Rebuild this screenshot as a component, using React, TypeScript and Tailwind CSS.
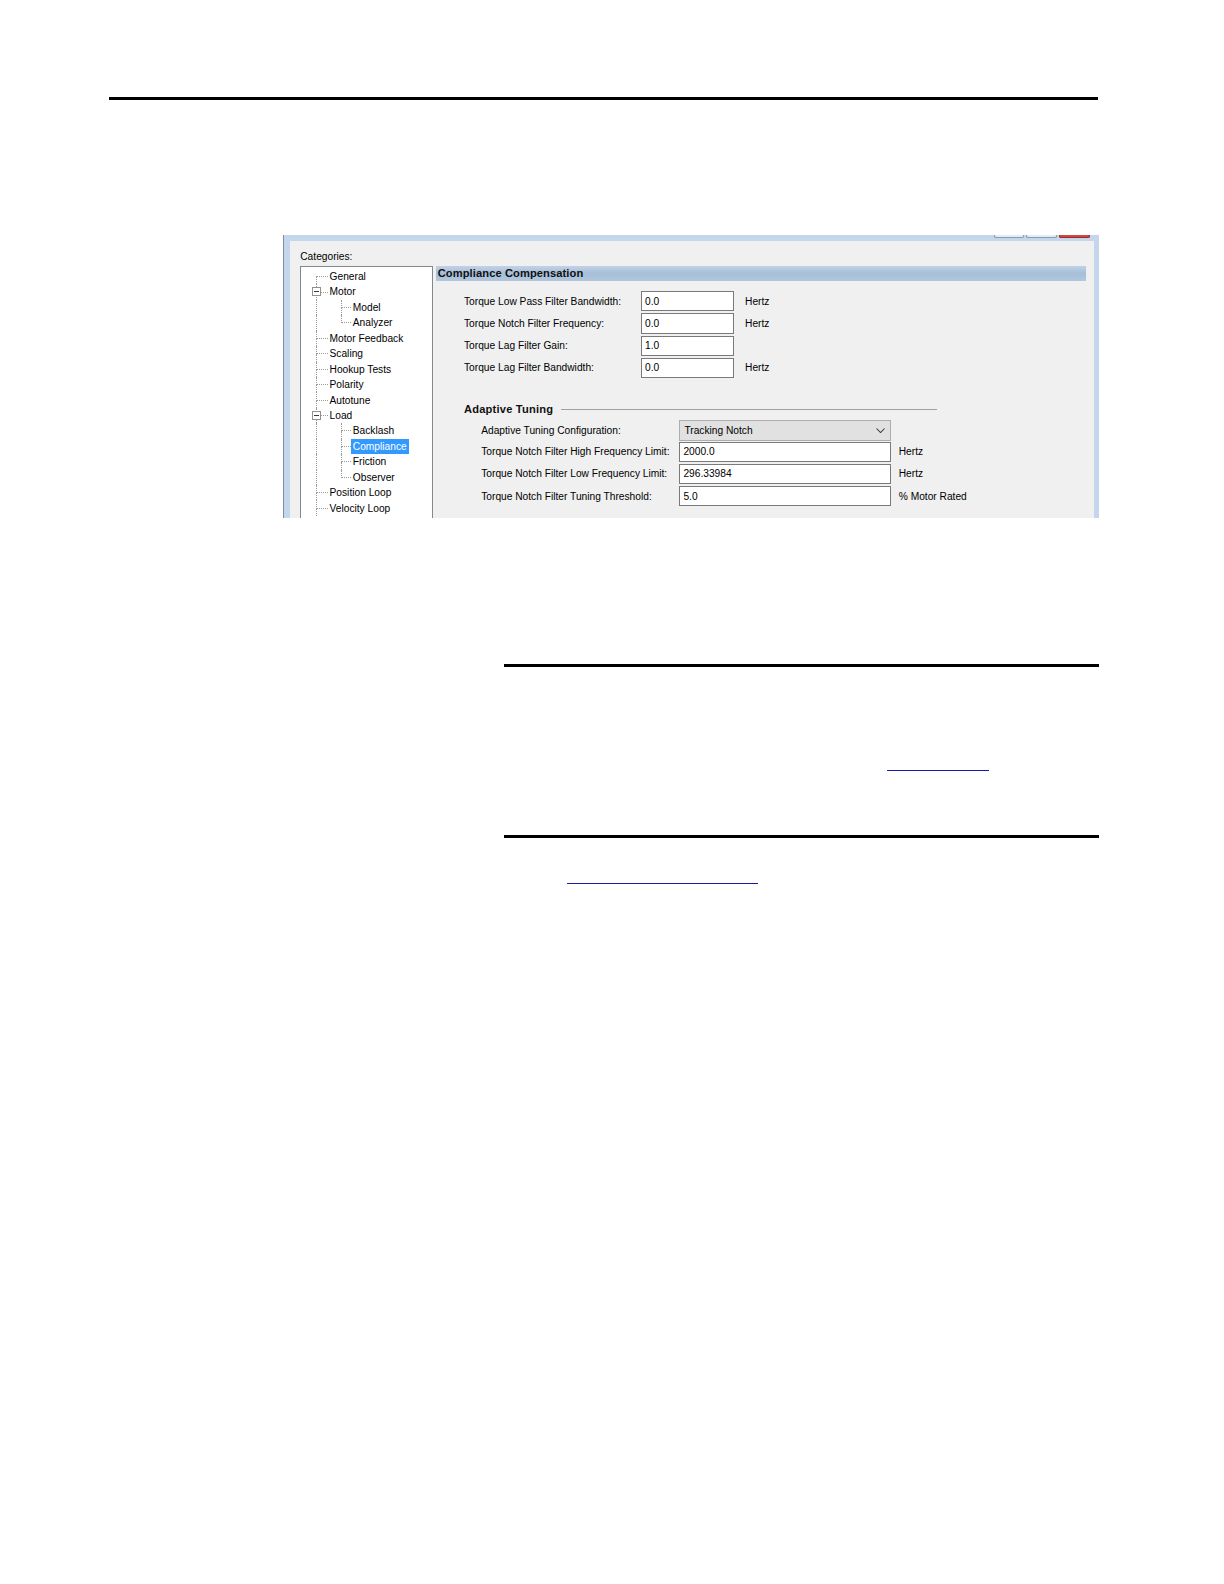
import React from 'react';

type TreeNode = {
  label: string;
  level: 1 | 2;
  expander?: boolean;
  first?: boolean;
  lastChild?: boolean;
  selected?: boolean;
};

const tree: TreeNode[] = [
  { label: 'General', level: 1, first: true },
  { label: 'Motor', level: 1, expander: true },
  { label: 'Model', level: 2 },
  { label: 'Analyzer', level: 2, lastChild: true },
  { label: 'Motor Feedback', level: 1 },
  { label: 'Scaling', level: 1 },
  { label: 'Hookup Tests', level: 1 },
  { label: 'Polarity', level: 1 },
  { label: 'Autotune', level: 1 },
  { label: 'Load', level: 1, expander: true },
  { label: 'Backlash', level: 2 },
  { label: 'Compliance', level: 2, selected: true },
  { label: 'Friction', level: 2 },
  { label: 'Observer', level: 2, lastChild: true },
  { label: 'Position Loop', level: 1 },
  { label: 'Velocity Loop', level: 1 },
];

const compensation = [
  { label: 'Torque Low Pass Filter Bandwidth:', value: '0.0', unit: 'Hertz' },
  { label: 'Torque Notch Filter Frequency:', value: '0.0', unit: 'Hertz' },
  { label: 'Torque Lag Filter Gain:', value: '1.0', unit: '' },
  { label: 'Torque Lag Filter Bandwidth:', value: '0.0', unit: 'Hertz' },
];

const adaptive = [
  { label: 'Torque Notch Filter High Frequency Limit:', value: '2000.0', unit: 'Hertz' },
  { label: 'Torque Notch Filter Low Frequency Limit:', value: '296.33984', unit: 'Hertz' },
  { label: 'Torque Notch Filter Tuning Threshold:', value: '5.0', unit: '% Motor Rated' },
];

// dotted connector: vertical line on the left, horizontal tick at the middle
function Guide({ first, last, width }: { first?: boolean; last?: boolean; width: string }) {
  return (
    <div className={`flex flex-col self-stretch shrink-0 ${width}`}>
      <div className={`flex-1 border-b border-dotted border-[#9a9a9a] ${first ? '' : 'border-l'}`} />
      <div className={`flex-1 border-dotted border-[#9a9a9a] ${last ? '' : 'border-l'}`} />
    </div>
  );
}

function TreeRow({ node }: { node: TreeNode }) {
  return (
    <div className="relative flex h-[15.27px] items-stretch">
      <div className="w-[15px] shrink-0" />
      {node.level === 1 ? (
        <Guide first={node.first} width="w-[11px]" />
      ) : (
        <>
          <div className="w-[24px] shrink-0 border-l border-dotted border-[#9a9a9a]" />
          <Guide last={node.lastChild} width="w-[10px]" />
        </>
      )}
      <div className="flex items-center">
        <span
          className={`px-[2px] leading-[15px] whitespace-nowrap ${
            node.selected ? 'bg-[#3399ff] text-white' : 'text-black'
          }`}
        >
          {node.label}
        </span>
      </div>
      {node.expander && (
        <div className="absolute left-[11px] top-[3px] flex h-[9px] w-[9px] items-center justify-center border border-[#919191] bg-white">
          <div className="h-px w-[5px] bg-[#3c3c3c]" />
        </div>
      )}
    </div>
  );
}

function TextBox({ value, w }: { value: string; w: string }) {
  return (
    <div className={`flex h-[20px] shrink-0 items-center border border-[#7a7a7a] bg-white pl-[3px] text-black ${w}`}>
      {value}
    </div>
  );
}

export default function App() {
  return (
    <div className="w-full bg-white pb-[200px] [zoom:1.011] [font-family:'Liberation_Sans',Arial,sans-serif]">
      <div className="h-[96px]" />
      <div className="ml-[108px] h-[3px] w-[978px] bg-black" />

      {/* dialog screenshot */}
      <div className="ml-[280px] mt-[133px] flex h-[280px] w-[807px] flex-col overflow-hidden border-l border-[#7f8d9c] bg-[#c4d6ec] text-[10.1px]">
        <div className="flex h-[6px] shrink-0 justify-end gap-[2px] pr-[9px]">
          <div className="h-[3px] w-[30px] rounded-b-[2px] border-x border-b border-[#8b9bb0] bg-[#e3ebf5]" />
          <div className="h-[3px] w-[30px] rounded-b-[2px] border-x border-b border-[#8b9bb0] bg-[#e3ebf5]" />
          <div className="h-[3px] w-[31px] rounded-b-[2px] border-x border-b border-[#9b2b2b] bg-[#d2473f]" />
        </div>
        <div className="ml-[6px] mr-[5px] flex flex-1 flex-col bg-[#f0f0f0] pl-[10px] pr-[8px]">
          <div className="pt-[10px] leading-[12px] text-black">Categories:</div>
          <div className="mt-[3px] flex flex-1 gap-[3px]">
            <div className="w-[131px] shrink-0 border-x border-t border-[#828790] bg-white pt-[2px]">
              {tree.map((n) => (
                <TreeRow key={n.label} node={n} />
              ))}
            </div>

            <div className="flex flex-1 flex-col">
              <div className="h-[15px] bg-gradient-to-b from-[#c0d2e6] via-[#a6bed8] to-[#b2c7de] pl-[2px] text-[11px] font-bold leading-[15px] tracking-[0.1px] text-[#101010]">
                Compliance Compensation
              </div>

              <div className="mt-[9px] flex flex-col pl-[28px]">
                {compensation.map((f) => (
                  <div key={f.label} className="flex h-[22px] items-center">
                    <div className="w-[175px] shrink-0 text-black">{f.label}</div>
                    <TextBox value={f.value} w="w-[92px]" />
                    <div className="ml-[11px] text-black">{f.unit}</div>
                  </div>
                ))}
              </div>

              <div className="ml-[28px] mt-[23px] flex h-[14px] w-[468px] items-center gap-[8px]">
                <div className="text-[11px] font-bold tracking-[0.2px] text-[#101010]">Adaptive Tuning</div>
                <div className="h-px flex-1 bg-[#a0a0a0]" />
              </div>

              <div className="mt-[4px] flex flex-col pl-[45px]">
                <div className="flex h-[20px] items-center">
                  <div className="w-[196px] shrink-0 text-black">Adaptive Tuning Configuration:</div>
                  <div className="flex h-[20px] w-[209px] items-center justify-between border border-[#adadad] bg-[#e1e1e1] pl-[4px] pr-[5px] text-black">
                    <span>Tracking Notch</span>
                    <svg width="9" height="5" viewBox="0 0 9 5" fill="none">
                      <path d="M0.5 0.5 L4.5 4.5 L8.5 0.5" stroke="#333" strokeWidth="1" />
                    </svg>
                  </div>
                </div>
                {adaptive.map((f) => (
                  <div key={f.label} className="flex h-[22px] items-center">
                    <div className="w-[196px] shrink-0 text-black">{f.label}</div>
                    <TextBox value={f.value} w="w-[209px]" />
                    <div className="ml-[8px] text-black">{f.unit}</div>
                  </div>
                ))}
              </div>
            </div>
          </div>
        </div>
      </div>

      <div className="ml-[499px] mt-[145px] h-[3px] w-[588px] bg-black" />
      <div className="ml-[877px] mt-[102px] h-px w-[101px] bg-[#1a1aa8]" />
      <div className="ml-[499px] mt-[63px] h-[3px] w-[588px] bg-black" />
      <div className="ml-[561px] mt-[44px] h-px w-[189px] bg-[#1a1aa8]" />
    </div>
  );
}
